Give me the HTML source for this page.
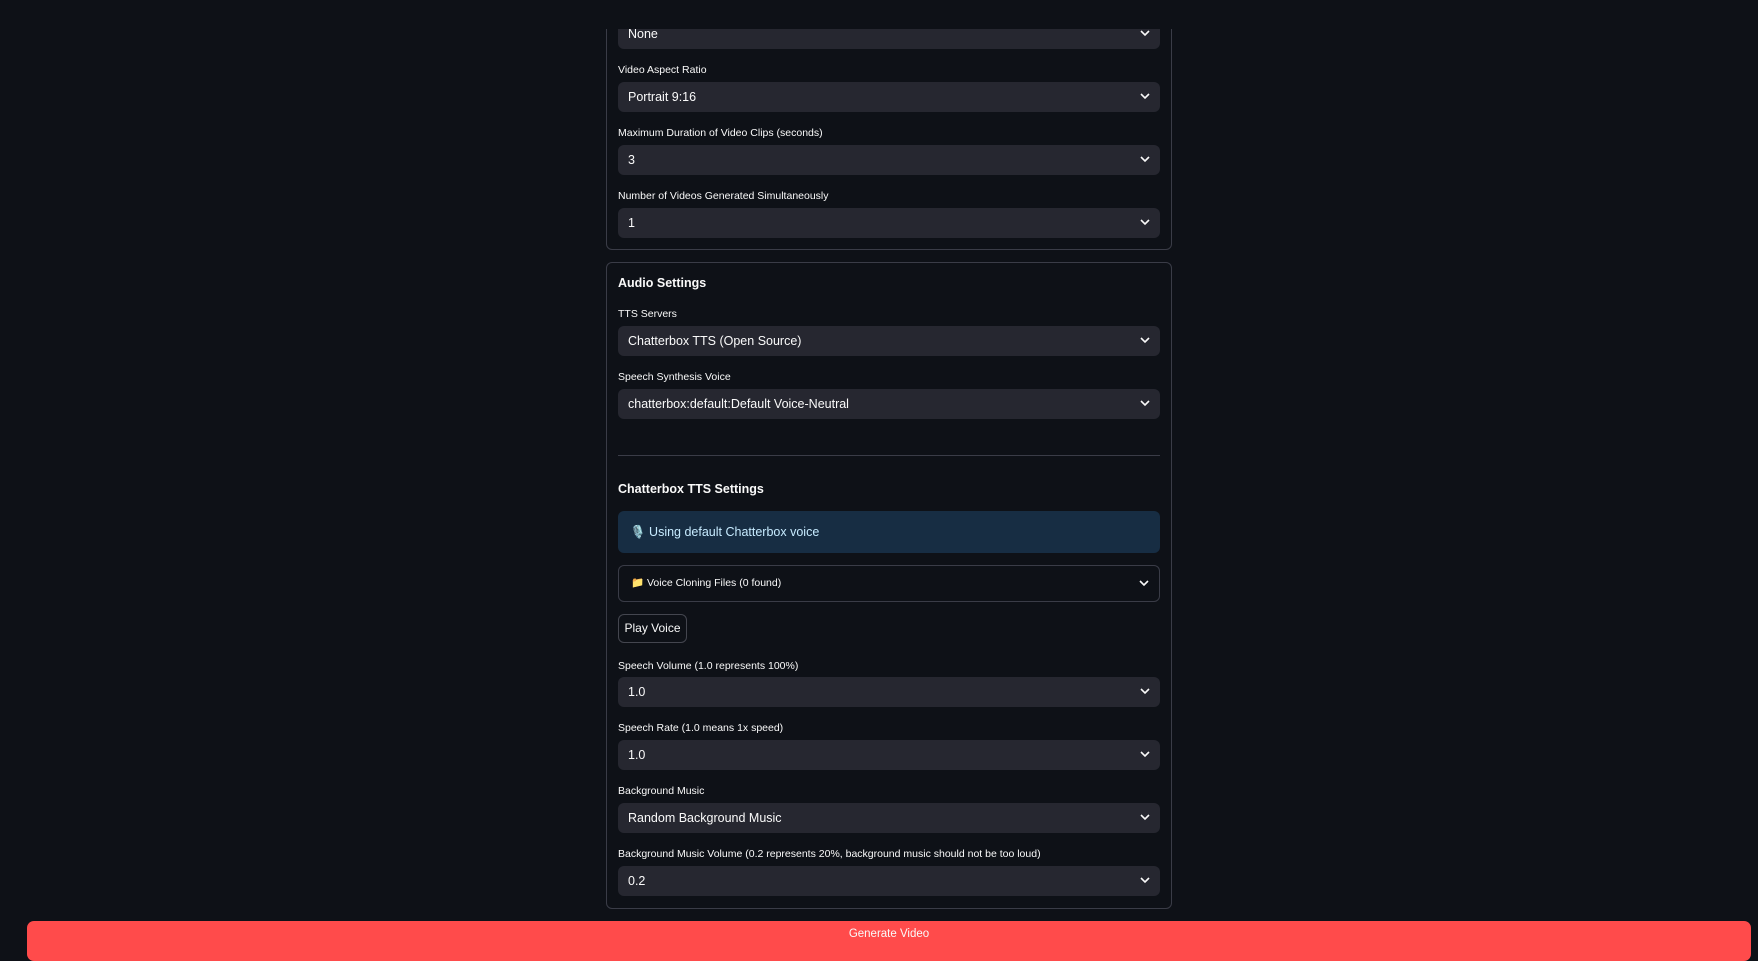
<!DOCTYPE html>
<html><head><meta charset="utf-8"><style>
*{box-sizing:border-box;margin:0;padding:0}
body{width:1758px;height:941px;background:#0e1117;color:#fafafa;font-family:"Liberation Sans Narrow","Liberation Sans",sans-serif;position:relative;overflow:hidden}
.abs{position:absolute}
.box{position:absolute;left:606px;width:566px;border:1px solid #3a3c47;border-radius:6px}
.lbl{position:absolute;left:618px;font-size:10.5px;color:#fafafa;transform:translateY(-50%)}
.sel{position:absolute;left:618px;width:542px;height:30px;background:#262730;border-radius:6px;font-size:12.5px;padding-left:10px;line-height:30px}
.sel svg,.exp svg{position:absolute;right:10px;top:11px}
.h{position:absolute;left:618px;font-weight:bold;font-size:12.5px;transform:translateY(-50%)}
</style></head><body>
<div class="box" style="top:-10px;height:260px"></div>
<div class="box" style="top:262px;height:647px"></div>

<div class="sel" style="top:19px">None<svg width="10" height="7" viewBox="0 0 10 7"><path d="M1 1l4 4 4-4" stroke="#fafafa" stroke-width="1.6" fill="none"/></svg></div>
<div class="abs" style="top:0;left:0;width:1758px;height:29px;background:#0e1117"></div>
<div class="lbl" style="top:70px">Video Aspect Ratio</div>
<div class="sel" style="top:82px">Portrait 9:16<svg width="10" height="7" viewBox="0 0 10 7"><path d="M1 1l4 4 4-4" stroke="#fafafa" stroke-width="1.6" fill="none"/></svg></div>
<div class="lbl" style="top:133px">Maximum Duration of Video Clips (seconds)</div>
<div class="sel" style="top:145px">3<svg width="10" height="7" viewBox="0 0 10 7"><path d="M1 1l4 4 4-4" stroke="#fafafa" stroke-width="1.6" fill="none"/></svg></div>
<div class="lbl" style="top:196px">Number of Videos Generated Simultaneously</div>
<div class="sel" style="top:208px">1<svg width="10" height="7" viewBox="0 0 10 7"><path d="M1 1l4 4 4-4" stroke="#fafafa" stroke-width="1.6" fill="none"/></svg></div>

<div class="h" style="top:283px">Audio Settings</div>
<div class="lbl" style="top:314px">TTS Servers</div>
<div class="sel" style="top:326px">Chatterbox TTS (Open Source)<svg width="10" height="7" viewBox="0 0 10 7"><path d="M1 1l4 4 4-4" stroke="#fafafa" stroke-width="1.6" fill="none"/></svg></div>
<div class="lbl" style="top:377px">Speech Synthesis Voice</div>
<div class="sel" style="top:389px">chatterbox:default:Default Voice-Neutral<svg width="10" height="7" viewBox="0 0 10 7"><path d="M1 1l4 4 4-4" stroke="#fafafa" stroke-width="1.6" fill="none"/></svg></div>
<div class="abs" style="top:455px;left:618px;width:542px;height:1px;background:#3a3c47"></div>
<div class="h" style="top:489px">Chatterbox TTS Settings</div>
<div class="abs" style="top:511px;left:618px;width:542px;height:42px;background:#172d43;border-radius:6px;font-size:12.5px;line-height:42px;padding-left:12px;color:#c7ebff">🎙️ Using default Chatterbox voice</div>
<div class="exp abs" style="top:565px;left:618px;width:542px;height:37px;border:1px solid #3a3c47;border-radius:6px;font-size:10.5px;line-height:35px;padding-left:12px">📁 Voice Cloning Files (0 found)<svg width="10" height="7" viewBox="0 0 10 7" style="top:14px"><path d="M1 1l4 4 4-4" stroke="#fafafa" stroke-width="1.6" fill="none"/></svg></div>
<div class="abs" style="top:614px;left:618px;width:69px;height:29px;border:1px solid #44464f;border-radius:6px;font-size:12px;line-height:27px;text-align:center">Play Voice</div>
<div class="lbl" style="top:666px">Speech Volume (1.0 represents 100%)</div>
<div class="sel" style="top:677px">1.0<svg width="10" height="7" viewBox="0 0 10 7"><path d="M1 1l4 4 4-4" stroke="#fafafa" stroke-width="1.6" fill="none"/></svg></div>
<div class="lbl" style="top:728px">Speech Rate (1.0 means 1x speed)</div>
<div class="sel" style="top:740px">1.0<svg width="10" height="7" viewBox="0 0 10 7"><path d="M1 1l4 4 4-4" stroke="#fafafa" stroke-width="1.6" fill="none"/></svg></div>
<div class="lbl" style="top:791px">Background Music</div>
<div class="sel" style="top:803px">Random Background Music<svg width="10" height="7" viewBox="0 0 10 7"><path d="M1 1l4 4 4-4" stroke="#fafafa" stroke-width="1.6" fill="none"/></svg></div>
<div class="lbl" style="top:854px">Background Music Volume (0.2 represents 20%, background music should not be too loud)</div>
<div class="sel" style="top:866px">0.2<svg width="10" height="7" viewBox="0 0 10 7"><path d="M1 1l4 4 4-4" stroke="#fafafa" stroke-width="1.6" fill="none"/></svg></div>

<div class="abs" style="top:921px;left:27px;width:1724px;height:40px;background:#ff4b4b;border-radius:7px;font-size:11.5px;text-align:center;padding-top:7px">Generate Video</div>
</body></html>
